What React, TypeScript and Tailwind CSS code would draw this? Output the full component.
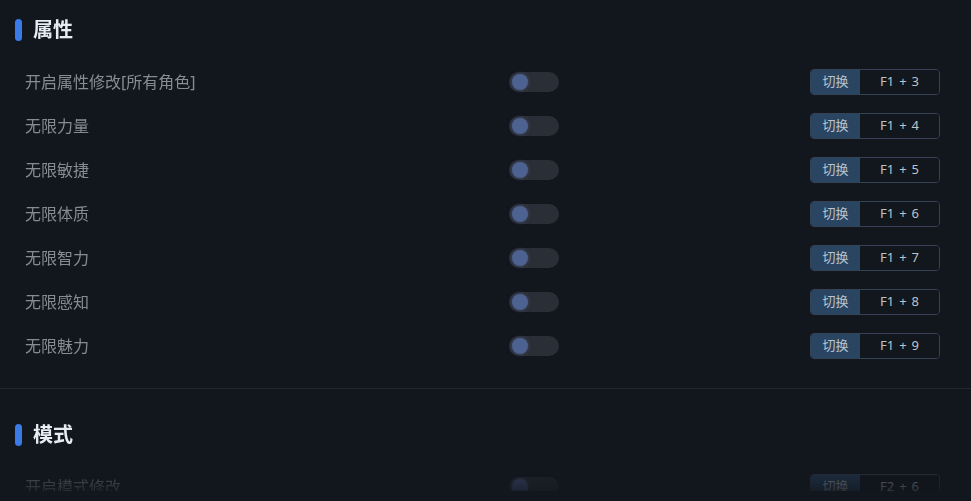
import React from 'react';

interface Row {
  label: string;
  key: string;
}

interface Section {
  title: string;
  rows: Row[];
}

const sections: Section[] = [
  {
    title: '属性',
    rows: [
      { label: '开启属性修改[所有角色]', key: 'F1 + 3' },
      { label: '无限力量', key: 'F1 + 4' },
      { label: '无限敏捷', key: 'F1 + 5' },
      { label: '无限体质', key: 'F1 + 6' },
      { label: '无限智力', key: 'F1 + 7' },
      { label: '无限感知', key: 'F1 + 8' },
      { label: '无限魅力', key: 'F1 + 9' },
    ],
  },
  {
    title: '模式',
    rows: [{ label: '开启模式修改', key: 'F2 + 6' }],
  },
];

function Toggle() {
  return (
    <div className="relative h-5 w-[50px] rounded-full bg-[#2a2e36]">
      <div className="absolute left-[3px] top-[2px] h-4 w-4 rounded-full bg-[#4d6290] shadow-[0_0_4px_rgba(81,103,154,0.6)]" />
    </div>
  );
}

function KeyBind({ keys }: { keys: string }) {
  return (
    <div className="flex h-[26px] w-[130px] overflow-hidden rounded-[4px] border border-[#364356] text-[13px]">
      <div className="flex w-[49px] items-center justify-center bg-[#2a4562] text-[#bcc3cd]">切换</div>
      <div className="flex flex-1 items-center justify-center gap-[5px] bg-[#12161d] text-[#bcc3cd]">
        {keys.split(' ').map((part, i) => (
          <span key={i}>{part}</span>
        ))}
      </div>
    </div>
  );
}

export default function App() {
  return (
    <div
      className="h-[501px] w-[971px] overflow-hidden bg-[#12161d]"
      style={{ fontFamily: '"Noto Sans", "Noto Sans CJK SC", sans-serif' }}
    >
      <div className="h-[491px] overflow-hidden [mask-image:linear-gradient(to_bottom,black_calc(100%-48px),rgba(0,0,0,0.18))]">
        {sections.map((section, i) => (
          <div key={section.title} className={i > 0 ? 'mt-[19px] border-t border-[#232831] pt-[35px]' : 'pt-[19px]'}>
            <div className="ml-[15px] flex h-[22px] items-center gap-[11px]">
              <div className="h-[22px] w-[7px] rounded-full bg-[#3b7be8]" />
              <span className="text-[20px] font-bold leading-none text-[#e8ebef]">{section.title}</span>
            </div>
            <div className="mt-[19px] pb-[1px]">
              {section.rows.map((row) => (
                <div key={row.label} className="flex h-[44px] items-center pl-[25px] pr-[31px]">
                  <div className="w-[484px] text-[16px] text-[#878c94]">{row.label}</div>
                  <Toggle />
                  <div className="flex flex-1 justify-end">
                    <KeyBind keys={row.key} />
                  </div>
                </div>
              ))}
            </div>
          </div>
        ))}
      </div>
    </div>
  );
}
